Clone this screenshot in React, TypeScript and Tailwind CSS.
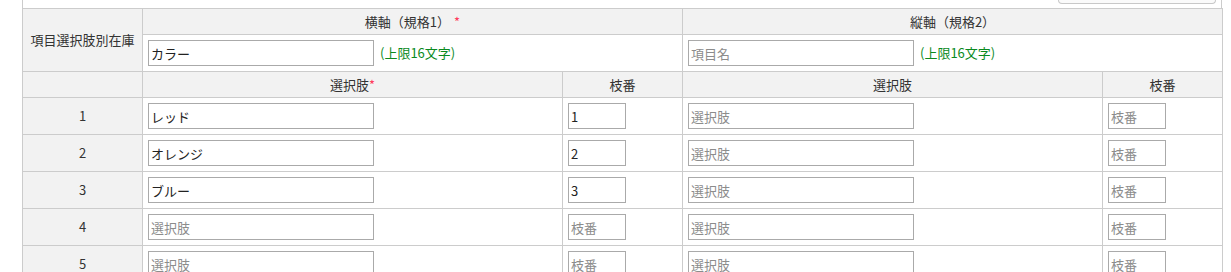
import React from "react";

const font = { fontFamily: '"Noto Sans CJK JP", "Noto Sans", sans-serif' };

function Inp({ value, placeholder, w }: { value?: string; placeholder: string; w: "wide" | "narrow" }) {
  return (
    <input
      defaultValue={value}
      placeholder={placeholder}
      className={
        (w === "wide" ? "w-[226px]" : "w-[58px]") +
        " h-[26px] block border border-[#aaaaaa] bg-white px-[2px] text-[13px] text-[#222] placeholder:text-[#8c8c8c] outline-none"
      }
    />
  );
}

const rows = [
  { n: "1", a: "レッド", b: "1" },
  { n: "2", a: "オレンジ", b: "2" },
  { n: "3", a: "ブルー", b: "3" },
  { n: "4", a: "", b: "" },
  { n: "5", a: "", b: "" },
];

export default function App() {
  const th = "border border-[#cccccc] bg-[#f2f2f2] font-normal text-[#333] text-[13px] text-center p-0";
  const td = "border border-[#cccccc] p-0 pl-[5px] align-middle";
  return (
    <div className="w-[1231px] h-[272px] overflow-hidden bg-white" style={font}>
      <div className="ml-[22px] w-[1200px] h-[8px] border-x border-[#cccccc] flex justify-end pr-[5px]">
        <div className="w-[158px] h-[4px] border border-t-0 border-[#c8c8c8] rounded-b-[5px] bg-[#fafafa]" />
      </div>
      <table className="ml-[22px] w-[1200px] table-fixed border-collapse text-[13px] text-[#333]">
        <colgroup>
          <col className="w-[120px]" />
          <col className="w-[420px]" />
          <col className="w-[120px]" />
          <col className="w-[420px]" />
          <col className="w-[120px]" />
        </colgroup>
        <tbody>
          <tr className="h-[26px]">
            <th rowSpan={2} className={th}>項目選択肢別在庫</th>
            <th colSpan={2} className={th}>
              横軸（規格1）<span className="text-[#ff3b5c] ml-[4px]">*</span>
            </th>
            <th colSpan={2} className={th}>縦軸（規格2）</th>
          </tr>
          <tr className="h-[37px]">
            <td colSpan={2} className={td}>
              <div className="flex items-center">
                <Inp value="カラー" placeholder="項目名" w="wide" />
                <span className="ml-[6px] text-[#0a8a1e]">(上限16文字)</span>
              </div>
            </td>
            <td colSpan={2} className={td}>
              <div className="flex items-center">
                <Inp placeholder="項目名" w="wide" />
                <span className="ml-[6px] text-[#0a8a1e]">(上限16文字)</span>
              </div>
            </td>
          </tr>
          <tr className="h-[26px]">
            <th className={th}></th>
            <th className={th}>
              選択肢<span className="text-[#ff3b5c]">*</span>
            </th>
            <th className={th}>枝番</th>
            <th className={th}>選択肢</th>
            <th className={th}>枝番</th>
          </tr>
          {rows.map((r) => (
            <tr key={r.n} className="h-[37px]">
              <td className="border border-[#cccccc] bg-[#f2f2f2] text-center p-0">{r.n}</td>
              <td className={td}><Inp value={r.a} placeholder="選択肢" w="wide" /></td>
              <td className={td}><Inp value={r.b} placeholder="枝番" w="narrow" /></td>
              <td className={td}><Inp placeholder="選択肢" w="wide" /></td>
              <td className={td}><Inp placeholder="枝番" w="narrow" /></td>
            </tr>
          ))}
        </tbody>
      </table>
    </div>
  );
}
